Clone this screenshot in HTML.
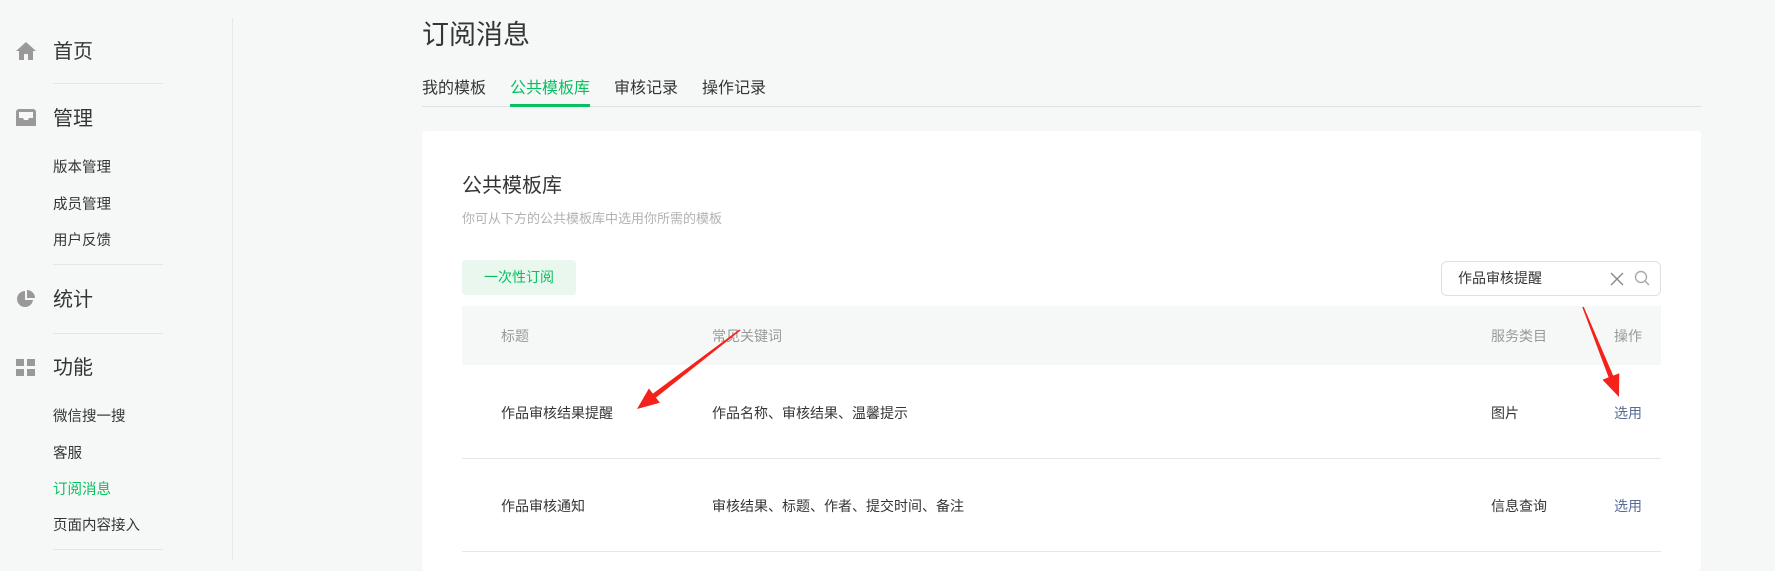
<!DOCTYPE html>
<html><head><meta charset="utf-8"><style>
*{margin:0;padding:0;box-sizing:border-box}
body{width:1775px;height:560px;overflow:hidden;background:#f6f8f7;font-family:"Liberation Sans","Noto Sans CJK SC",sans-serif;position:relative;color:#353535}
.a{position:absolute;white-space:nowrap}
.side{position:absolute;left:232px;top:18px;width:1px;height:542px;background:#e7e9e8}
.ln{position:absolute;left:53px;width:110px;height:1px;background:#e4e6e5}
.m{font-size:20px;color:#353535;left:53px;line-height:24px}
.s{font-size:14.5px;color:#353535;left:53px;line-height:20px}
svg.i{position:absolute;left:15px}
</style></head><body>
<div class="side"></div>
<svg class="i" style="top:40px" width="22" height="22" viewBox="0 0 22 22"><path d="M11 2 L21 11 L18 11 L18 20 L13 20 L13 14 L9 14 L9 20 L4 20 L4 11 L1 11Z" fill="#999"/></svg>
<div class="a m" style="top:40px">首页</div>
<div class="ln" style="top:83px"></div>
<svg class="i" style="top:107px" width="22" height="22" viewBox="0 0 22 22"><path d="M3 2h16l2 2v15H1V4z" fill="#999"/><path d="M4 5h14v6h-4l-1 2h-4l-1-2H4z" fill="#f6f8f7"/></svg>
<div class="a m" style="top:107px">管理</div>
<div class="a s" style="top:158px">版本管理</div>
<div class="a s" style="top:195px">成员管理</div>
<div class="a s" style="top:231px">用户反馈</div>
<div class="ln" style="top:264px"></div>
<svg class="i" style="top:288px" width="22" height="22" viewBox="0 0 22 22"><path d="M10 3A8 8 0 1 0 18 12H10Z" fill="#999"/><path d="M12 2A8 8 0 0 1 20 10H12Z" fill="#999"/></svg>
<div class="a m" style="top:288px">统计</div>
<div class="ln" style="top:333px"></div>
<svg class="i" style="top:357px" width="22" height="22" viewBox="0 0 22 22"><rect x="1" y="2" width="8" height="7" fill="#999"/><rect x="12" y="2" width="8" height="7" fill="#999"/><rect x="1" y="12" width="8" height="7" fill="#999"/><rect x="12" y="12" width="8" height="7" fill="#999"/></svg>
<div class="a m" style="top:356px">功能</div>
<div class="a s" style="top:407px">微信搜一搜</div>
<div class="a s" style="top:444px">客服</div>
<div class="a s" style="top:480px;color:#07c160">订阅消息</div>
<div class="a s" style="top:516px">页面内容接入</div>
<div class="ln" style="top:549px"></div>

<div class="a" style="left:422px;top:18px;font-size:27px;line-height:34px;color:#353535">订阅消息</div>
<div class="a" style="left:422px;top:78px;font-size:16px;line-height:22px">我的模板</div>
<div class="a" style="left:510px;top:78px;font-size:16px;line-height:22px;color:#07c160">公共模板库</div>
<div class="a" style="left:614px;top:78px;font-size:16px;line-height:22px">审核记录</div>
<div class="a" style="left:702px;top:78px;font-size:16px;line-height:22px">操作记录</div>
<div class="a" style="left:422px;top:106px;width:1279px;height:1px;background:#e0e2e1"></div>
<div class="a" style="left:510px;top:104px;width:80px;height:3px;background:#07c160"></div>

<div class="a" style="left:422px;top:131px;width:1279px;height:440px;background:#fff;border-radius:4px"></div>
<div class="a" style="left:462px;top:173px;font-size:20px;line-height:26px;color:#353535">公共模板库</div>
<div class="a" style="left:462px;top:210px;font-size:13px;line-height:18px;color:#b2b2b2">你可从下方的公共模板库中选用你所需的模板</div>
<div class="a" style="left:462px;top:260px;width:114px;height:35px;background:#e9f7ef;border-radius:4px;color:#07c160;font-size:14px;line-height:35px;text-align:center">一次性订阅</div>
<div class="a" style="left:1441px;top:261px;width:220px;height:35px;border:1px solid #e0e0e0;border-radius:6px;background:#fff"></div>
<div class="a" style="left:1458px;top:268px;font-size:14px;line-height:20px">作品审核提醒</div>
<svg class="a" style="left:1609px;top:271px" width="16" height="16" viewBox="0 0 16 16"><path d="M2 2L14 14M14 2L2 14" stroke="#888" stroke-width="1.4"/></svg>
<svg class="a" style="left:1634px;top:270px" width="17" height="17" viewBox="0 0 17 17"><circle cx="7" cy="7" r="5.5" stroke="#aaa" stroke-width="1.4" fill="none"/><path d="M11 11L15 15" stroke="#aaa" stroke-width="1.4"/></svg>

<div class="a" style="left:462px;top:306px;width:1199px;height:59px;background:#f6f8f7"></div>
<div class="a" style="left:501px;top:326px;font-size:14px;line-height:20px;color:#999">标题</div>
<div class="a" style="left:712px;top:326px;font-size:14px;line-height:20px;color:#999">常见关键词</div>
<div class="a" style="left:1491px;top:326px;font-size:14px;line-height:20px;color:#999">服务类目</div>
<div class="a" style="left:1614px;top:326px;font-size:14px;line-height:20px;color:#999">操作</div>

<div class="a" style="left:501px;top:403px;font-size:14px;line-height:20px">作品审核结果提醒</div>
<div class="a" style="left:712px;top:403px;font-size:14px;line-height:20px">作品名称、审核结果、温馨提示</div>
<div class="a" style="left:1491px;top:403px;font-size:14px;line-height:20px">图片</div>
<div class="a" style="left:1614px;top:403px;font-size:14px;line-height:20px;color:#576b95">选用</div>
<div class="a" style="left:462px;top:458px;width:1199px;height:1px;background:#e7e7e7"></div>
<div class="a" style="left:501px;top:496px;font-size:14px;line-height:20px">作品审核通知</div>
<div class="a" style="left:712px;top:496px;font-size:14px;line-height:20px">审核结果、标题、作者、提交时间、备注</div>
<div class="a" style="left:1491px;top:496px;font-size:14px;line-height:20px">信息查询</div>
<div class="a" style="left:1614px;top:496px;font-size:14px;line-height:20px;color:#576b95">选用</div>
<div class="a" style="left:462px;top:551px;width:1199px;height:1px;background:#e7e7e7"></div>

<svg class="a" style="left:0;top:0" width="1775" height="560">
<path d="M740.5 330.5L655.9 397.6L659.9 402.7L637 409L648.9 388.5L652.9 393.6L739.5 329.4Z" fill="#f5221b"/>
<path d="M1583.7 306.7L1613.2 375.6L1619.3 373.2L1619 397L1602.5 379.8L1608.6 377.4L1582.3 307.3Z" fill="#f5221b"/>
</svg>
</body></html>
